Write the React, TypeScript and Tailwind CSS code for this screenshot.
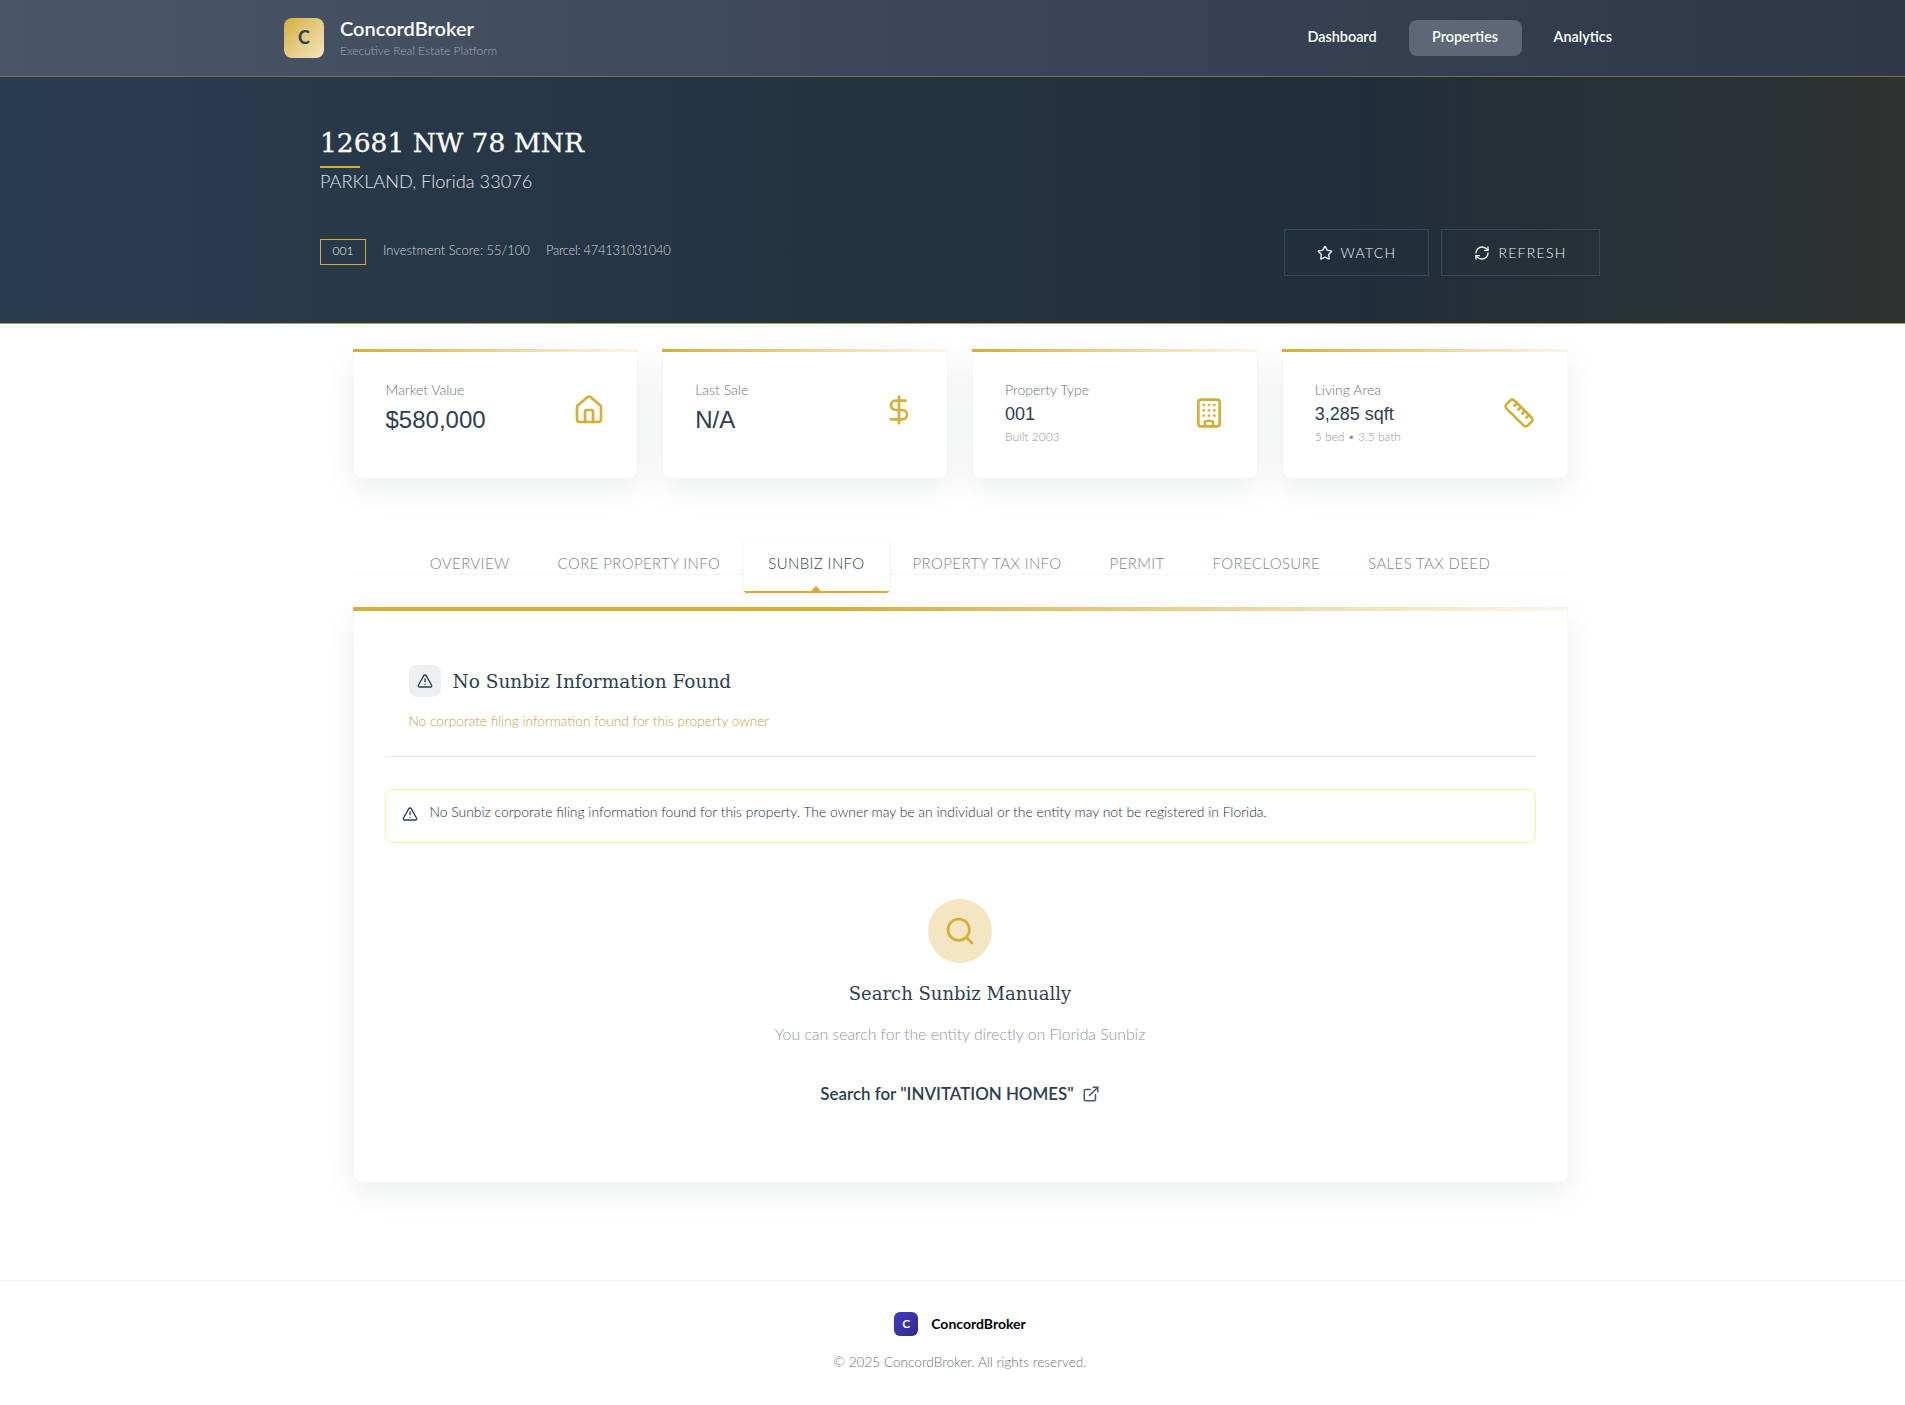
import { Building, DollarSign, ExternalLink, House, RefreshCw, Ruler, Search, Star, TriangleAlert } from "lucide-react";
import React from "react";

const serif = "font-['DejaVu_Serif',serif]";
const arial = "font-['Liberation_Sans',sans-serif]";

const stats = [
  { label: "Market Value", value: "$580,000", big: true, icon: House },
  { label: "Last Sale", value: "N/A", big: true, icon: DollarSign },
  { label: "Property Type", value: "001", sub: "Built 2003", big: false, icon: Building },
  { label: "Living Area", value: "3,285 sqft", sub: "5 bed • 3.5 bath", big: false, icon: Ruler },
];

const tabs = ["OVERVIEW", "CORE PROPERTY INFO", "SUNBIZ INFO", "PROPERTY TAX INFO", "PERMIT", "FORECLOSURE", "SALES TAX DEED"];

const StatCard = ({ label, value, sub, big, icon: Icon }: (typeof stats)[number] & { sub?: string }) => (
  <div className="flex flex-col h-[130px] bg-white rounded-lg shadow-[0_10px_30px_rgba(44,62,80,0.09)] border border-gray-100 border-t-0">
    <div className="h-[3px] -mx-px bg-gradient-to-r from-[#d4af37] to-[#fbf7e9]" />
    <div className="flex items-center justify-between px-8 pt-[28px]">
      <div className={big ? "pb-1" : ""}>
        <p className="text-sm leading-5 font-light text-[#6b7280]">{label}</p>
        <p className={`${arial} text-[#2c3e50] ${big ? "text-2xl leading-8 mt-[4px]" : "text-lg leading-6 mt-[2px]"}`}>{value}</p>
        {sub && <p className="text-xs leading-4 mt-[3px] font-light text-[#8f96a3]">{sub}</p>}
      </div>
      <Icon size={32} strokeWidth={2} className="text-[#d4af37]" />
    </div>
  </div>
);

export default function App() {
  return (
    <div className="w-full overflow-hidden">
      <div className="w-[1920px] bg-white font-['Lato',sans-serif]">
        <header className="h-[77px] bg-gradient-to-r from-[#4a5568] to-[#2d3748] border-b border-[#7a6f4b]">
          <div className="w-[1352px] mx-auto h-[76px] flex items-center justify-between">
            <div className="flex items-center gap-4">
              <div className="w-10 h-10 pb-0.5 rounded-lg bg-gradient-to-br from-[#d4af37] to-[#f4e4bc] flex items-center justify-center text-[#2c3e50] font-bold text-lg">C</div>
              <div className="-mt-0.5">
                <p className="text-xl leading-6 font-semibold text-white">ConcordBroker</p>
                <p className="text-xs leading-4 mt-[3px] font-light text-[#a0a8b4]">Executive Real Estate Platform</p>
              </div>
            </div>
            <nav className="flex items-center gap-2 text-[14.4px] font-semibold text-white">
              <a className="h-9 px-6 pb-0.5 flex items-center">Dashboard</a>
              <a className="h-9 w-[113px] pb-0.5 flex items-center justify-center rounded-lg bg-[#5e6776]">Properties</a>
              <a className="h-9 px-6 pb-0.5 flex items-center">Analytics</a>
            </nav>
          </div>
        </header>

        <section className="h-[247px] bg-gradient-to-r from-[#2a3c4f] via-[#212e3b] via-70% to-[#2e3330] border-b border-[#b89d45]">
          <div className="w-[1280px] mx-auto pt-[46px]">
            <h1 className={`${serif} text-[26.5px] leading-10 text-white [-webkit-text-stroke:0.3px_#fff]`}>12681 NW 78 MNR</h1>
            <div className="w-10 h-0.5 mt-[3px] bg-[#d4af37]" />
            <p className="text-[18.2px] leading-6 mt-[1px] font-light text-[#e2e5e9]">PARKLAND, Florida 33076</p>
            <div className="flex items-start justify-between mt-[36px]">
              <div className="flex items-center mt-[10px]">
                <span className="w-[46px] h-[26px] pb-0.5 flex items-center justify-center border border-[#d4af37] text-xs font-light text-[#e8ebee]">001</span>
                <span className="ml-[17px] pb-0.5 text-[13px] font-light text-[#d0d4da]">Investment Score: 55/100</span>
                <span className="ml-4 pb-0.5 text-[13px] tracking-[-0.3px] font-light text-[#d0d4da]">Parcel: 474131031040</span>
              </div>
              <div className="flex gap-3 text-sm tracking-[0.09em] font-light text-[#f1f3f5]">
                <button className="w-[145px] h-[47px] flex items-center justify-center gap-2 border border-[#35475a]">
                  <Star size={16} />
                  WATCH
                </button>
                <button className="w-[159px] h-[47px] flex items-center justify-center gap-2 border border-[#35475a]">
                  <RefreshCw size={16} />
                  REFRESH
                </button>
              </div>
            </div>
          </div>
        </section>

        <main className="w-[1215px] mx-auto pt-[25px]">
          <div className="grid grid-cols-4 gap-6">
            {stats.map((s) => (
              <StatCard key={s.label} {...s} />
            ))}
          </div>

          <div className="relative flex justify-center h-[54px] mt-[60px]">
            <div className="absolute left-0 right-0 top-[35px] border-b border-gray-100" />
            {tabs.map((t) =>
              t === "SUNBIZ INFO" ? (
                <div key={t} className="relative h-[54px] px-6 flex items-center pb-[3px] bg-white rounded-t rounded-b-[3px] border-b-2 border-[#d4af37] shadow-[0_1px_5px_rgba(0,0,0,0.08)] text-[15px] font-light tracking-wide text-[#2c3e50] whitespace-nowrap">
                  {t}
                  <span className="absolute left-1/2 -translate-x-1/2 bottom-0 border-x-[5px] border-x-transparent border-b-[5px] border-b-[#d4af37]" />
                </div>
              ) : (
                <div key={t} className="relative h-[35px] mb-[19px] px-6 flex items-center pt-[13px] text-[15px] font-light tracking-wide text-[#7b8390] whitespace-nowrap">{t}</div>
              ),
            )}
          </div>

          <div className="mt-[14px] h-[576px] bg-white rounded-lg border border-gray-100 border-t-0 shadow-[0_10px_30px_rgba(44,62,80,0.09)]">
            <div className="h-1 -mx-px bg-gradient-to-r from-[#d4af37] via-[#d4af37] via-40% to-[#fbf7e9]" />
            <div className="px-[31px] pt-[53px]">
              <div className="pl-6 border-b border-gray-200 h-[93px]">
                <div className="flex items-center gap-3">
                  <div className="w-8 h-8 rounded-lg bg-[#edf0f2] flex items-center justify-center">
                    <TriangleAlert size={16} className="text-[#2c3e50]" />
                  </div>
                  <h2 className={`${serif} pt-0.5 text-[18.5px] leading-8 text-[#2c3e50]`}>No Sunbiz Information Found</h2>
                </div>
                <p className="mt-[13px] text-[13.7px] leading-5 font-light text-[#d29a3f]">No corporate filing information found for this property owner</p>
              </div>
              <div className="mt-8 h-[54px] rounded-lg border border-[#fdeea0] flex items-start px-4 pt-[12px] gap-[12px]">
                <TriangleAlert size={16} className="mt-1 text-[#2c3e50]" />
                <p className="text-[13.9px] leading-5 font-light text-[#1f2d3d]">No Sunbiz corporate filing information found for this property. The owner may be an individual or the entity may not be registered in Florida.</p>
              </div>
              <div className="flex flex-col items-center pt-[56px]">
                <div className="w-16 h-16 rounded-full bg-[#f4e6c3] flex items-center justify-center">
                  <Search size={32} className="text-[#d4af37]" />
                </div>
                <h3 className={`${serif} mt-[15px] text-[18px] leading-8 text-[#2c3e50]`}>Search Sunbiz Manually</h3>
                <p className="mt-[14px] text-[15.8px] leading-5 font-light text-[#8f96a3]">You can search for the entity directly on Florida Sunbiz</p>
                <a className="mt-[38px] flex items-center gap-2 text-[16.9px] leading-6 font-semibold text-[#2c3e50]">
                  Search for "INVITATION HOMES"
                  <ExternalLink size={18} className="text-[#4b5563]" />
                </a>
              </div>
            </div>
          </div>
        </main>

        <footer className="mt-[97px] h-[126px] border-t border-gray-100 flex flex-col items-center pt-[31px]">
          <div className="flex items-center gap-[13px]">
            <div className="w-6 h-6 rounded-md bg-gradient-to-br from-[#4338ca] to-[#312e81] flex items-center justify-center text-white text-xs font-bold">C</div>
            <span className="text-sm font-bold text-black">ConcordBroker</span>
          </div>
          <p className="mt-4 text-[13.6px] font-light text-[#6b7280]">© 2025 ConcordBroker. All rights reserved.</p>
        </footer>
      </div>
    </div>
  );
}
